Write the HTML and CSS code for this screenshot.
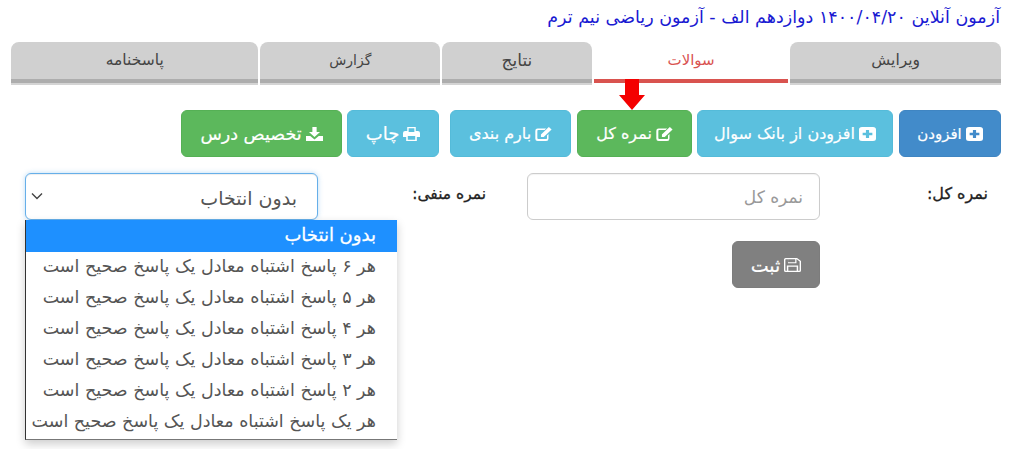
FILE: index.html
```html
<!DOCTYPE html>
<html lang="fa" dir="rtl">
<head>
<meta charset="utf-8">
<title>سوالات</title>
<link rel="stylesheet" href="styles.css">
</head>
<body>
<svg class="defs" width="0" height="0" aria-hidden="true">
  <symbol id="i-plus" viewBox="0 0 14 14" preserveAspectRatio="none"><path fill-rule="evenodd" d="M2.500 0h9A2.500 2.500 0 0 1 14 2.500v9a2.500 2.500 0 0 1-2.500 2.500h-9A2.500 2.500 0 0 1 0 11.500v-9A2.500 2.500 0 0 1 2.500 0zM5.700 3v2.700H3v2.600h2.700V11h2.600V8.300H11V5.700H8.300V3z" fill="currentColor"/></symbol>
  <symbol id="i-edit" viewBox="0 0 16 14" preserveAspectRatio="none"><path d="M2.500 1.500h8L9 3H3a.8.8 0 0 0-.8.800v7.400c0 .4.400.8.800.8h7.500c.4 0 .8-.4.800-.8V8.500l1.400-1.400v4.600a2.200 2.200 0 0 1-2.200 2.200H2.500A2.200 2.200 0 0 1 .3 11.700V3.700a2.200 2.200 0 0 1 2.200-2.200z" fill="currentColor"/><path d="M13 0l2.600 2.600L8.200 10H5.600V7.400z" fill="currentColor"/></symbol>
  <symbol id="i-print" viewBox="0 0 16 14" preserveAspectRatio="none"><path fill-rule="evenodd" d="M4 0h8v4h2a2 2 0 0 1 2 2v4h-3v4H3v-4H0V6a2 2 0 0 1 2-2h2zm1.300 1.300V5h5.400V1.300zM4.500 9v3.700h7V9z" fill="currentColor"/></symbol>
  <symbol id="i-down" viewBox="0 0 16 14" preserveAspectRatio="none"><path d="M6 0h4v5h3.200L8 10 2.800 5H6z" fill="currentColor"/><path d="M0 9h4l4 3.500L12 9h4v5H0z" fill="currentColor"/></symbol>
  <symbol id="i-save" viewBox="0 0 15 14" preserveAspectRatio="none"><path fill-rule="evenodd" d="M1.500 0h10L15 3v9.500a1.500 1.500 0 0 1-1.500 1.500h-12A1.500 1.500 0 0 1 0 12.500v-11A1.500 1.500 0 0 1 1.500 0zm.1 1.300a.4.400 0 0 0-.4.400v10.600c0 .2.200.4.400.4h.9V7.500h10v5.200h.9a.4.400 0 0 0 .4-.4V3.500l-2.600-2.200h-.2v4H3.500v-4zm2 0v2.900h6.300V1.300zM3.800 8.800v3.900h7.400V8.800z" fill="currentColor"/></symbol>
</svg>

<main class="page">
  <h1 class="title">آزمون آنلاین ۱۴۰۰/۰۴/۲۰ دوازدهم الف - آزمون ریاضی نیم ترم</h1>

  <nav class="tabs">
    <a class="tab tab-1">ویرایش</a>
    <a class="tab tab-2 active">سوالات</a>
    <a class="tab tab-3">نتایج</a>
    <a class="tab tab-4">گزارش</a>
    <a class="tab tab-5">پاسخنامه</a>
  </nav>

  <div class="toolbar">
    <button class="btn btn-blue b1"><svg class="ico"><use href="#i-plus"/></svg>افزودن</button>
    <button class="btn btn-cyan b2"><svg class="ico"><use href="#i-plus"/></svg>افزودن از بانک سوال</button>
    <button class="btn btn-green b3"><svg class="ico"><use href="#i-edit"/></svg>نمره کل</button>
    <button class="btn btn-cyan b4"><svg class="ico"><use href="#i-edit"/></svg>بارم بندی</button>
    <button class="btn btn-cyan b5"><svg class="ico"><use href="#i-print"/></svg>چاپ</button>
    <button class="btn btn-green b6"><svg class="ico"><use href="#i-down"/></svg>تخصیص درس</button>
    <svg class="arrow" viewBox="0 0 26 31" width="26" height="31"><path d="M6 0h14v16h6L13 31 0 16h6z" fill="#f40000"/></svg>
  </div>

  <form class="form-row">
    <label class="label">نمره کل:</label>
    <input class="control" type="text" placeholder="نمره کل">
    <label class="label label-2">نمره منفی:</label>
    <div class="select-wrap">
      <div class="control select-box">
        <span>بدون انتخاب</span>
        <svg class="chev" viewBox="0 0 12 8" width="12" height="8"><path d="M1 1.500l5 5 5-5" fill="none" stroke="#444" stroke-width="1.400"/></svg>
      </div>
      <ul class="dropdown">
        <li class="selected">بدون انتخاب</li>
        <li>هر ۶ پاسخ اشتباه معادل یک پاسخ صحیح است</li>
        <li>هر ۵ پاسخ اشتباه معادل یک پاسخ صحیح است</li>
        <li>هر ۴ پاسخ اشتباه معادل یک پاسخ صحیح است</li>
        <li>هر ۳ پاسخ اشتباه معادل یک پاسخ صحیح است</li>
        <li>هر ۲ پاسخ اشتباه معادل یک پاسخ صحیح است</li>
        <li>هر یک پاسخ اشتباه معادل یک پاسخ صحیح است</li>
      </ul>
    </div>
  </form>

  <div class="save-row">
    <button class="btn btn-gray b7"><svg class="ico"><use href="#i-save"/></svg>ثبت</button>
  </div>
</main>
</body>
</html>
```
FILE: styles.css
```css
* { box-sizing: border-box; }
html, body { margin: 0; padding: 0; }
body {
  font-family: "DejaVu Sans", "Noto Sans", sans-serif;
  background: #fff;
  color: #333;
  overflow: hidden;
  height: 449px;
}
.defs { position: absolute; }
.page { padding: 0 11px; }
.title {
  margin: 0;
  height: 42px;
  padding: 5px 1px 0 0;
  font-size: 17.5px;
  line-height: 24px;
  font-weight: normal;
  color: #1a1ad2;
  white-space: nowrap;
}
.tabs { display: flex; gap: 2px; height: 43px; }
.tab {
  display: block;
  height: 43px;
  padding-top: 6px;
  text-align: center;
  font-size: 15.500px;
  line-height: 24px;
  color: #444;
  background: #d0d0d0;
  border-radius: 8px 8px 0 0;
  border-bottom: 2px solid #d4d4d4;
  box-shadow: inset 0 -4px 0 #adadad;
}
.tab-1 { width: 211px; }
.tab-2 { width: 195px; }
.tab-3 { width: 150px; font-size: 17px; }
.tab-4 { width: 180px; font-size: 14px; }
.tab-5 { width: 248px; }
.tab.active {
  background: #fff;
  color: #d9534f;
  font-size: 15px;
  border-bottom-color: #fff;
  box-shadow: inset 0 -4px 0 #d9534f;
}
.toolbar {
  position: relative;
  display: flex;
  margin-top: 25px;
  height: 47px;
}
.btn {
  display: flex;
  align-items: center;
  justify-content: center;
  gap: 4px;
  height: 47px;
  padding: 0;
  border: 1px solid transparent;
  border-radius: 6px;
  font-family: inherit;
  font-size: 16px;
  color: #fff;
  -webkit-text-stroke: .2px #fff;
}
.btn-blue { background: #428bca; border-color: #3f85c2; }
.btn-cyan { background: #5bc0de; border-color: #54bbd9; }
.btn-green { background: #5cb85c; border-color: #55b055; }
.btn-gray { background: #808080; border-color: #7c7c7c; }
.ico { width: 17px; height: 14px; flex: none; }
.b1 { width: 102px; font-size: 15px; }
.b2 { width: 196px; margin-right: 6px; }
.b3 { width: 115px; margin-right: 5px; }
.b4 { width: 121px; margin-right: 6px; }
.b5 { width: 92px; margin-right: 11px; font-size: 18px; }
.b6 { width: 161px; margin-right: 5px; font-size: 17.500px; }
.b7 { width: 88px; font-size: 19px; }
.arrow { position: absolute; top: -31px; left: 608px; }
.form-row {
  display: flex;
  margin-top: 16px;
  padding-right: 13px;
  height: 47px;
}
.label {
  width: 168px;
  flex: none;
  padding-top: 9px;
  font-size: 16px;
  line-height: 24px;
  color: #222;
  -webkit-text-stroke: .3px #222;
}
.label-2 { margin-right: 41px; font-size: 15.500px; }
.control {
  display: block;
  width: 293px;
  height: 47px;
  flex: none;
  padding: 0 16px;
  border: 1px solid #ccc;
  border-radius: 6px;
  background: #fff;
  font-family: inherit;
  font-size: 17px;
  color: #555;
  outline: none;
  box-shadow: inset 0 1px 1px rgba(0,0,0,.05);
}
.control::placeholder { color: #999; opacity: 1; }
.select-wrap { position: relative; width: 293px; flex: none; }
.select-box {
  display: flex;
  align-items: center;
  justify-content: space-between;
  padding: 2px 20px 0 5px;
  border-color: #66afe9;
  font-size: 19px;
  box-shadow: inset 0 1px 1px rgba(0,0,0,.07), 0 0 5px rgba(102,175,233,.45);
}
.chev { margin-top: -4px; }
.dropdown {
  position: absolute;
  top: 47px;
  left: 0;
  width: 372px;
  height: 220px;
  margin: 0;
  padding: 0;
  list-style: none;
  background: #fff;
  border-left: 1px solid #333;
  border-bottom: 1px solid #777;
  box-shadow: 0 4px 9px rgba(0,0,0,.2);
  z-index: 2;
}
.dropdown li {
  height: 31px;
  padding-right: 21px;
  font-size: 17.500px;
  line-height: 29px;
  color: #555;
  white-space: nowrap;
}
.dropdown li.selected {
  height: 32px;
  background: #1e90ff;
  color: #fff;
  font-size: 18px;
  -webkit-text-stroke: .3px #fff;
}
.save-row { display: flex; margin-top: 21px; margin-right: 181px; }
```
